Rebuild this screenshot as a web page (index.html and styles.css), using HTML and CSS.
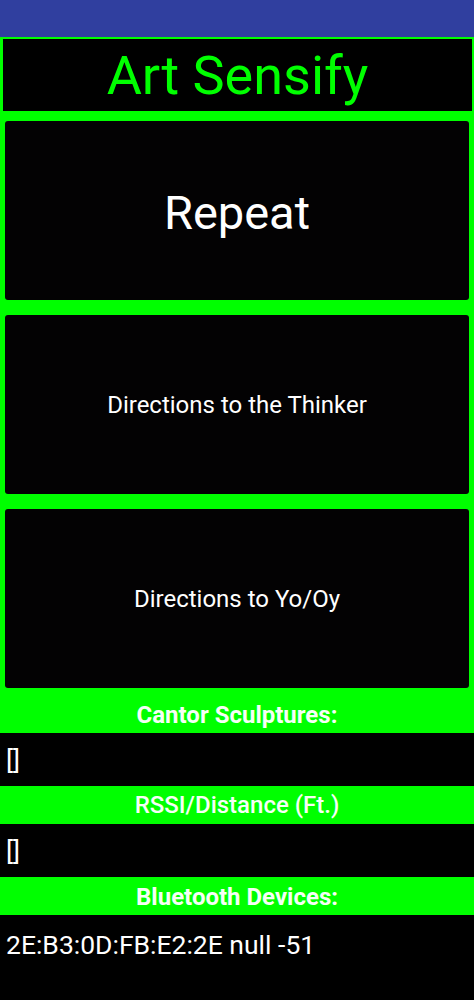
FILE: index.html
```html
<!DOCTYPE html>
<html>
<head>
<meta charset="utf-8">
<link rel="stylesheet" href="styles.css">
</head>
<body>
<div class="statusbar"></div>
<main class="screen">
  <div class="title-wrap">
    <h1 class="title">Art Sensify</h1>
  </div>
  <div class="buttons">
    <button class="btn btn-big">Repeat</button>
    <button class="btn">Directions to the Thinker</button>
    <button class="btn">Directions to Yo/Oy</button>
  </div>
  <div class="label label-first bold">Cantor Sculptures:</div>
  <div class="value">[]</div>
  <div class="label medium">RSSI/Distance (Ft.)</div>
  <div class="value">[]</div>
  <div class="label bold">Bluetooth Devices:</div>
  <div class="devices">2E:B3:0D:FB:E2:2E null -51</div>
</main>
</body>
</html>
```
FILE: styles.css
```css
html, body {
  margin: 0;
  padding: 0;
  background: #000;
  font-family: Roboto, "Liberation Sans", sans-serif;
}
.statusbar {
  height: 37px;
  background: #303f9f;
}
.screen {
  background: #00ff00;
  display: flex;
  flex-direction: column;
}
.title-wrap {
  padding: 2px 2px 0 3px;
}
.title {
  margin: 0;
  height: 72px;
  background: #000;
  color: #00ff00;
  font-weight: 400;
  font-size: 54px;
  line-height: 74px;
  text-align: center;
}
.buttons {
  display: flex;
  flex-direction: column;
  gap: 15px;
  padding: 10px 5px 0 5px;
}
.btn {
  height: 179px;
  border: none;
  border-radius: 3px;
  background: #030203;
  color: #fff;
  font-family: Roboto, "Liberation Sans", sans-serif;
  font-size: 24px;
  padding: 0;
  display: flex;
  align-items: center;
  justify-content: center;
}
.btn-big {
  font-size: 47px;
  padding-top: 4px;
}
.label {
  height: 38px;
  line-height: 38px;
  padding-top: 2px;
  box-sizing: border-box;
  text-align: center;
  color: #f6fff6;
  font-size: 24px;
  font-weight: 400;
}
.label-first {
  line-height: 38px;
  padding-top: 9px;
  height: 45px;
}
.bold {
  font-weight: 700;
  font-size: 24px;
  line-height: 36px;
}
.medium {
  font-weight: 500;
  line-height: 34px;
}
.value {
  height: 53px;
  background: #000;
  color: #fff;
  font-size: 26.5px;
  line-height: 53px;
  padding-left: 6px;
}
.devices {
  background: #000;
  color: #fff;
  font-size: 26.5px;
  line-height: 32px;
  padding: 14px 0 0 6px;
  height: 85px;
  box-sizing: border-box;
}
```
